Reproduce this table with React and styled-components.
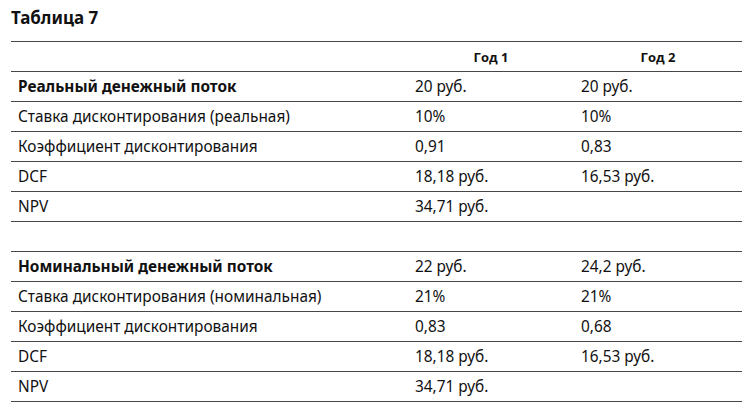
import React from "react"
import styled, { createGlobalStyle } from "styled-components"

const GlobalStyle = createGlobalStyle`
    body {
        margin: 0;
        background: #ffffff;
        color: #111111;
        font-family: "Noto Sans", "Open Sans", sans-serif;
    }
`;

const Page = styled.div`
    padding: 4px 11px 0 11px;
    width: 731px;
`;

const Title = styled.h1`
    margin: 0;
    height: 37px;
    font-size: 17px;
    line-height: 28px;
    font-weight: 700;
    color: #111;
`;

const Table = styled.table`
    width: 731px;
    border-collapse: collapse;
    table-layout: fixed;
    border-top: 1px solid #474747;
`;

const Row = styled.tr`
    height: 30px;
    border-bottom: 1px solid #474747;
`;

const HeadCell = styled.th`
    padding: 0 7px;
    font-family: "Open Sans", "Noto Sans", sans-serif;
    font-size: 13px;
    font-weight: 700;
    text-align: ${props => (props.$empty ? "left" : "center")};
`;

const Cell = styled.td`
    padding: 0 7px;
    font-size: 15.4px;
    font-weight: ${props => (props.$bold ? 700 : 400)};
    white-space: nowrap;
    vertical-align: middle;
`;

const sections = [
    {
        title: "Реальный денежный поток",
        values: ["20 руб.", "20 руб."],
        rows: [
            ["Ставка дисконтирования (реальная)", "10%", "10%"],
            ["Коэффициент дисконтирования", "0,91", "0,83"],
            ["DCF", "18,18 руб.", "16,53 руб."],
            ["NPV", "34,71 руб.", ""],
        ],
    },
    {
        title: "Номинальный денежный поток",
        values: ["22 руб.", "24,2 руб."],
        rows: [
            ["Ставка дисконтирования (номинальная)", "21%", "21%"],
            ["Коэффициент дисконтирования", "0,83", "0,68"],
            ["DCF", "18,18 руб.", "16,53 руб."],
            ["NPV", "34,71 руб.", ""],
        ],
    },
];

const App = () => {
    return (
        <Page>
            <GlobalStyle />
            <Title>Таблица 7</Title>
            <Table>
                <colgroup>
                    <col style={{ width: "397px" }} />
                    <col style={{ width: "166px" }} />
                    <col style={{ width: "168px" }} />
                </colgroup>
                <thead>
                    <Row>
                        <HeadCell $empty></HeadCell>
                        <HeadCell>Год 1</HeadCell>
                        <HeadCell>Год 2</HeadCell>
                    </Row>
                </thead>
                <tbody>
                    {sections.map((section, i) => (
                        <React.Fragment key={section.title}>
                            {i > 0 && (
                                <Row>
                                    <Cell></Cell>
                                    <Cell></Cell>
                                    <Cell></Cell>
                                </Row>
                            )}
                            <Row>
                                <Cell $bold>{section.title}</Cell>
                                <Cell>{section.values[0]}</Cell>
                                <Cell>{section.values[1]}</Cell>
                            </Row>
                            {section.rows.map((r, j) => (
                                <Row key={j}>
                                    <Cell>{r[0]}</Cell>
                                    <Cell>{r[1]}</Cell>
                                    <Cell>{r[2]}</Cell>
                                </Row>
                            ))}
                        </React.Fragment>
                    ))}
                </tbody>
            </Table>
        </Page>
    )
};

export default App;
